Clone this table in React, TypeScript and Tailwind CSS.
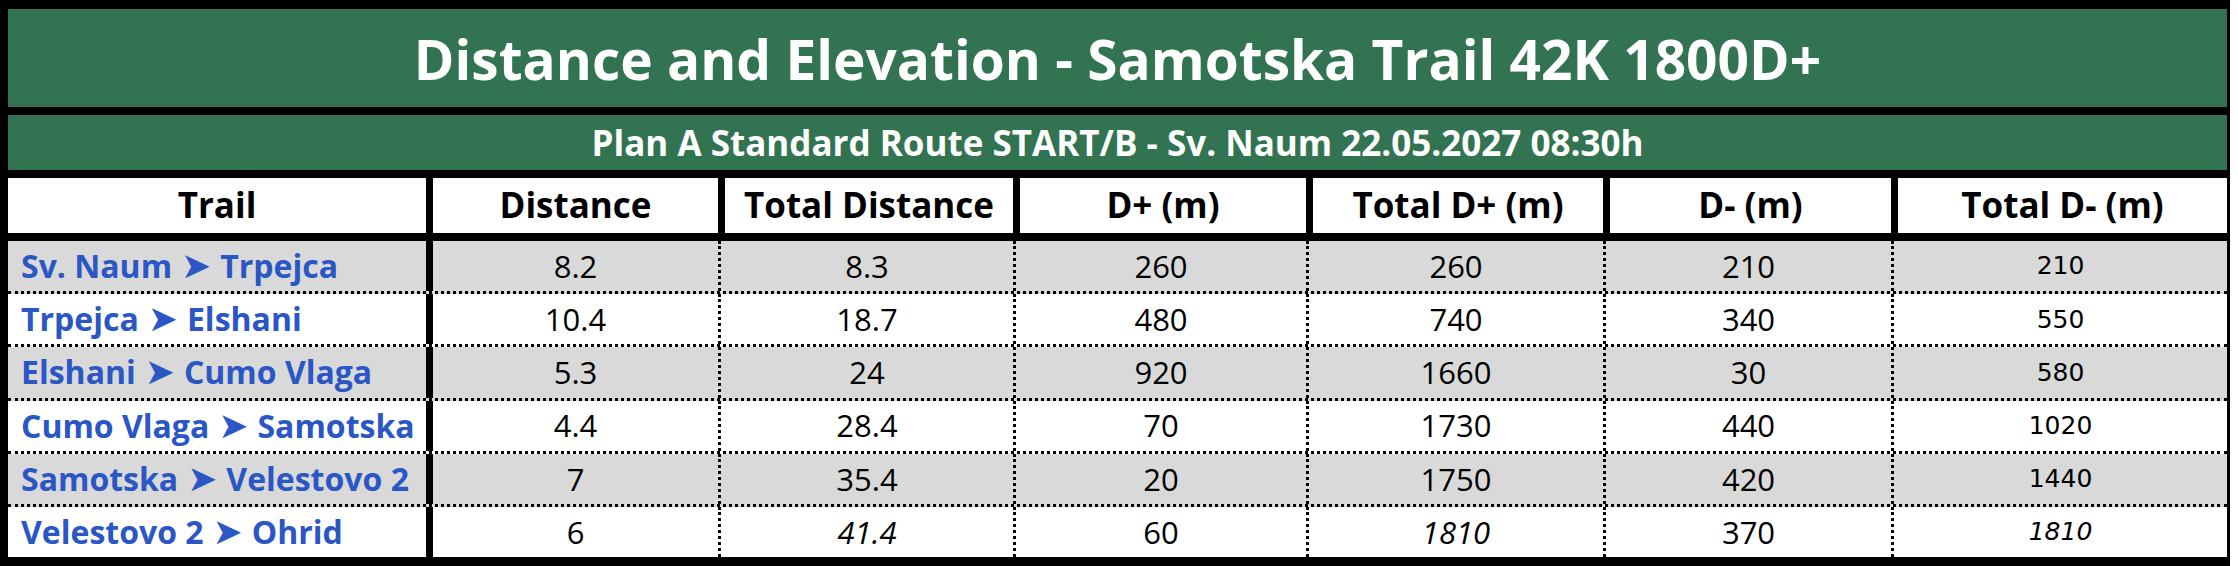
const COLS = "grid grid-cols-[418px_292px_295px_293px_297px_288px_336px]";

type Row = {
  from: string;
  to: string;
  dist: string;
  total: string;
  up: string;
  totalUp: string;
  down: string;
  totalDown: string;
  last?: boolean;
};

const rows: Row[] = [
  { from: "Sv. Naum", to: "Trpejca", dist: "8.2", total: "8.3", up: "260", totalUp: "260", down: "210", totalDown: "210" },
  { from: "Trpejca", to: "Elshani", dist: "10.4", total: "18.7", up: "480", totalUp: "740", down: "340", totalDown: "550" },
  { from: "Elshani", to: "Cumo Vlaga", dist: "5.3", total: "24", up: "920", totalUp: "1660", down: "30", totalDown: "580" },
  { from: "Cumo Vlaga", to: "Samotska", dist: "4.4", total: "28.4", up: "70", totalUp: "1730", down: "440", totalDown: "1020" },
  { from: "Samotska", to: "Velestovo 2", dist: "7", total: "35.4", up: "20", totalUp: "1750", down: "420", totalDown: "1440" },
  { from: "Velestovo 2", to: "Ohrid", dist: "6", total: "41.4", up: "60", totalUp: "1810", down: "370", totalDown: "1810", last: true },
];

const headers = ["Trail", "Distance", "Total Distance", "D+ (m)", "Total D+ (m)", "D- (m)", "Total D- (m)"];

function NumCell({ value, italic, first, mono }: { value: string; italic?: boolean; first?: boolean; mono?: boolean }) {
  return (
    <div
      className={`flex items-center justify-center text-black ${
        first ? "border-l-[7px] border-black" : "border-l-[3px] border-dotted border-black"
      } ${italic ? "italic" : ""} ${
        mono ? "text-[25px] font-['DejaVu_Sans',sans-serif]" : "text-[31px]"
      }`}
    >
      {value}
    </div>
  );
}

export default function App() {
  return (
    <div className="w-[2238px] h-[566px] bg-white font-['Open_Sans',sans-serif]">
      <div className="w-[2230px] h-[566px] bg-black pl-[8px] pr-[3px] pt-[9px] pb-[9px] flex flex-col">
        <div className="h-[98px] bg-[#327452] flex items-center justify-center">
          <h1 className="text-white font-bold text-[55px] leading-none">
            Distance and Elevation - Samotska Trail 42K 1800D+
          </h1>
        </div>
        <div className="h-[55px] mt-[8px] bg-[#327452] flex items-center justify-center">
          <h2 className="text-white font-bold text-[35px] leading-none">
            Plan A Standard Route START/B - Sv. Naum 22.05.2027 08:30h
          </h2>
        </div>
        <div className={`${COLS} h-[55px] mt-[8px]`}>
          {headers.map((h, i) => (
            <div
              key={h}
              className={`bg-white flex items-center justify-center font-bold text-[35px] text-black ${
                i > 0 ? "border-l-[7px] border-black" : ""
              }`}
            >
              {h}
            </div>
          ))}
        </div>
        <div className="mt-[8px] flex flex-col flex-1">
          {rows.map((r, i) => (
            <div
              key={r.from}
              className={`${COLS} flex-1 ${i % 2 === 0 ? "bg-[#d9d9d9]" : "bg-white"} ${
                r.last ? "" : "border-b-[3px] border-dotted border-black"
              }`}
            >
              <div className="flex items-center pl-[13px] font-bold text-[32px] text-[#2a56c6] whitespace-nowrap">
                {r.from}
                <span className="mx-[9px] font-['DejaVu_Sans',sans-serif] text-[36px] leading-none">➤</span>
                {r.to}
              </div>
              <NumCell value={r.dist} first />
              <NumCell value={r.total} italic={r.last} />
              <NumCell value={r.up} />
              <NumCell value={r.totalUp} italic={r.last} />
              <NumCell value={r.down} />
              <NumCell value={r.totalDown} italic={r.last} mono />
            </div>
          ))}
        </div>
      </div>
    </div>
  );
}
